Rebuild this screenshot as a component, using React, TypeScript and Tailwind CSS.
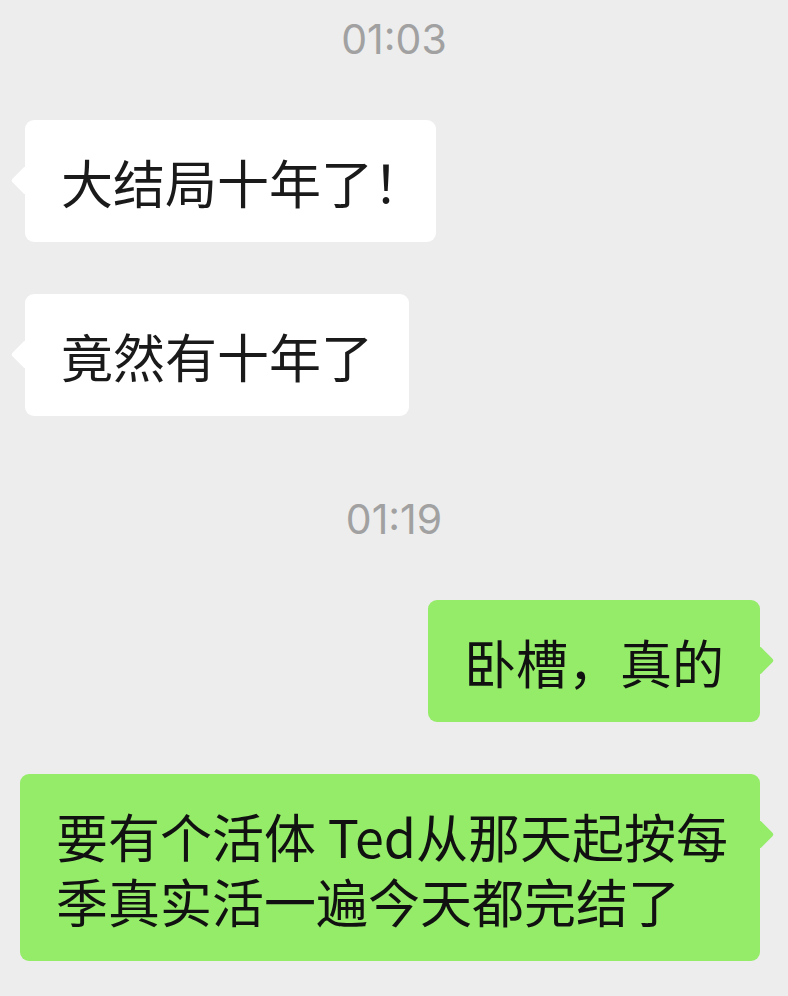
import React from 'react';

type Msg =
  | { kind: 'time'; text: string }
  | { kind: 'in' | 'out'; lines: React.ReactNode[]; wide?: boolean };

const messages: Msg[] = [
  { kind: 'time', text: '01:03' },
  { kind: 'in', lines: [<>大结局十年了<span className="tracking-[-25px]">！</span></>] },
  { kind: 'in', lines: ['竟然有十年了'] },
  { kind: 'time', text: '01:19' },
  { kind: 'out', lines: ['卧槽，真的'] },
  { kind: 'out', lines: ['要有个活体 Ted从那天起按每', '季真实活一遍今天都完结了'], wide: true },
];

const Bubble: React.FC<{ side: 'in' | 'out'; lines: React.ReactNode[]; wide?: boolean }> = ({ side, lines, wide }) => {
  const mine = side === 'out';
  return (
    <div className={mine ? 'flex justify-end pr-[28px]' : 'flex justify-start pl-[25px]'}>
      <div
        className={
          'relative rounded-[9px] py-[28.5px] text-[52px] leading-[65px] whitespace-nowrap ' +
          (wide ? 'w-[740px] pl-[36px] pr-[30px] ' : 'px-9 ') +
          (mine ? 'bg-[#95ec69] text-[#111111]' : 'bg-white text-[#1a1a1a]')
        }
      >
        <span
          className={
            'absolute top-[50px] w-[21px] h-[21px] rotate-45 rounded-[3px] ' +
            (mine ? 'right-[-10px] bg-[#95ec69]' : 'left-[-10px] bg-white')
          }
        />
        <div className="relative">
          {lines.map((l, i) => (
            <div key={i}>{l}</div>
          ))}
        </div>
      </div>
    </div>
  );
};

const App: React.FC = () => {
  return (
    <div
      className="min-h-[996px] w-[788px] bg-[#ededed] pt-[19px]"
      style={{ fontFamily: '"Noto Sans CJK SC", "Noto Sans", sans-serif' }}
    >
      <div className="flex flex-col">
        {messages.map((m, i) => {
          const prev = messages[i - 1];
          let mt = '';
          if (i > 0) {
            if (m.kind === 'time') mt = 'mt-[83px]';
            else if (prev.kind === 'time') mt = 'mt-[61px]';
            else mt = 'mt-[52px]';
          }
          if (m.kind === 'time') {
            return (
              <div
                key={i}
                className={mt + ' text-center text-[41px] leading-[40px] text-[#a1a1a1]'}
                style={{ fontFamily: 'Inter, "Noto Sans", sans-serif' }}
              >
                {m.text}
              </div>
            );
          }
          return (
            <div key={i} className={mt}>
              <Bubble side={m.kind} lines={m.lines} wide={m.wide} />
            </div>
          );
        })}
      </div>
    </div>
  );
};

export default App;
